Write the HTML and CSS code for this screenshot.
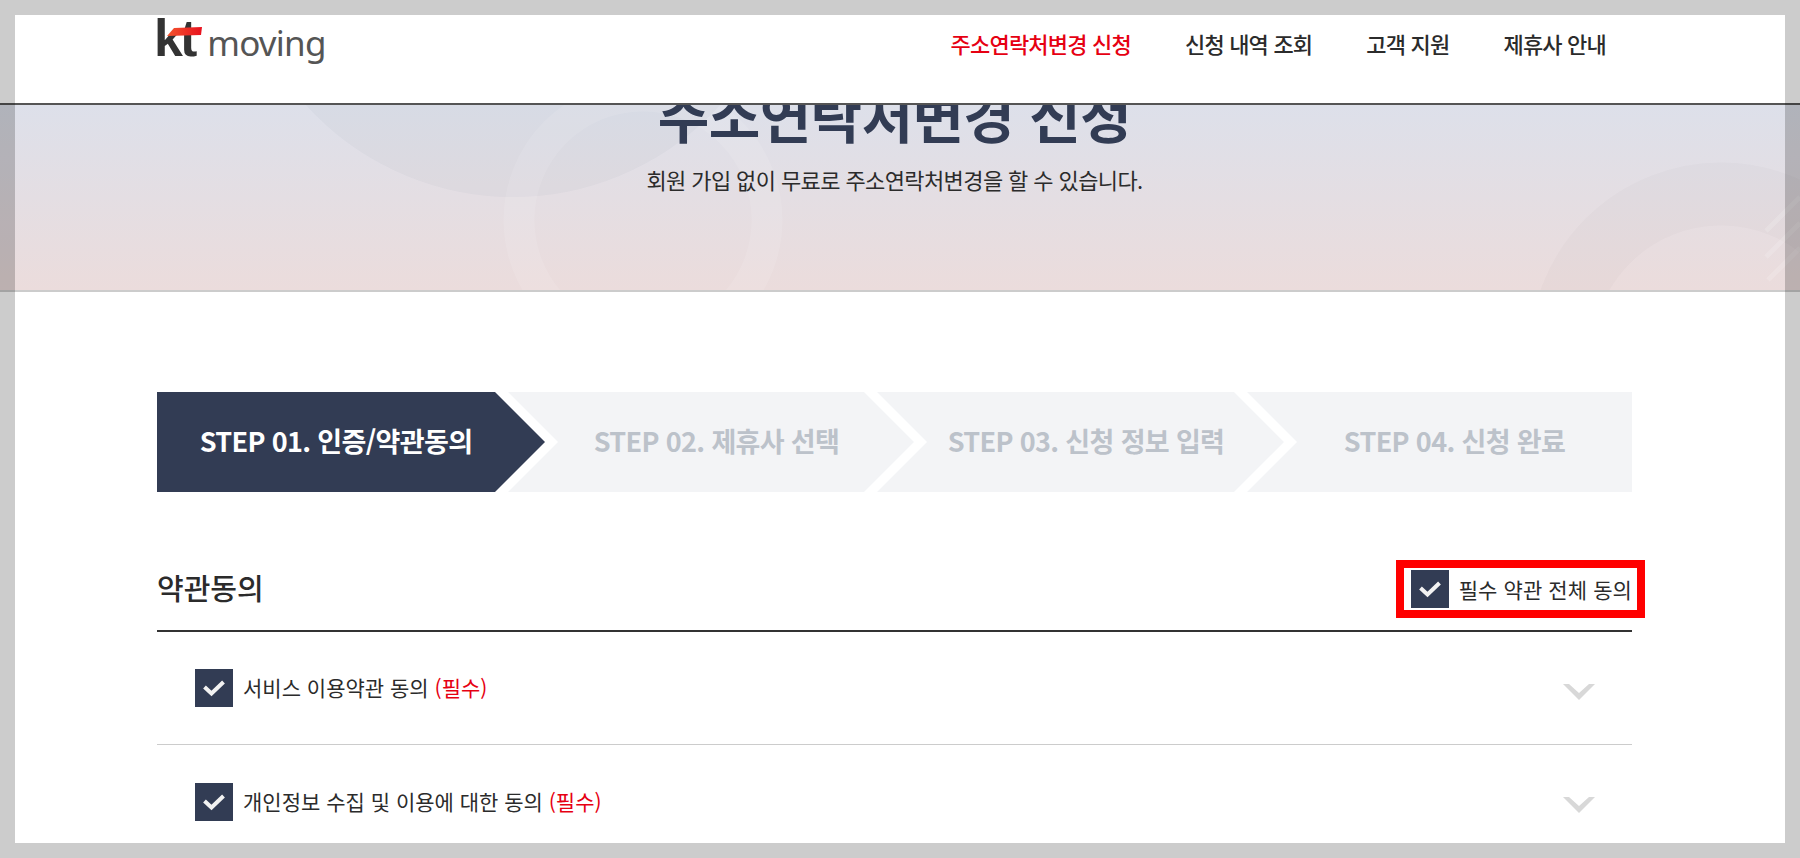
FILE: index.html
```html
<!DOCTYPE html>
<html lang="ko">
<head>
    <meta charset="UTF-8">
    <meta name="viewport" content="width=device-width, initial-scale=1.0">
    <title>kt moving - 주소연락처변경 신청</title>
    <link rel="stylesheet" href="styles.css">
</head>
<body>
    <!-- Header -->
    <header class="site-header">
        <div class="wrap header-inner">
            <a class="logo" href="#">
                <span class="logo-kt">kt</span>
                <svg class="logo-swoosh" viewBox="0 0 35 9" aria-hidden="true">
                    <defs>
                        <linearGradient id="swoosh" x1="0" x2="1" y1="0" y2="0">
                            <stop offset="0" stop-color="#f4562f"/>
                            <stop offset="1" stop-color="#e8111e"/>
                        </linearGradient>
                    </defs>
                    <polygon points="7,1 35,0 34,8 0,9" fill="url(#swoosh)"/>
                </svg>
                <span class="logo-moving">moving</span>
            </a>
            <nav class="main-nav">
                <a class="active" href="#">주소연락처변경 신청</a>
                <a href="#">신청 내역 조회</a>
                <a href="#">고객 지원</a>
                <a href="#">제휴사 안내</a>
            </nav>
        </div>
    </header>

    <!-- Hero band -->
    <section class="hero">
        <svg class="hero-deco" aria-hidden="true">
            <circle cx="513" cy="-187" r="279" fill="#3a4a70" fill-opacity="0.035"/>
            <circle cx="643" cy="115" r="124" fill="none" stroke="#fff" stroke-opacity="0.1" stroke-width="31"/>
            <circle cx="1721" cy="249" r="160" fill="none" stroke="#5a5040" stroke-opacity="0.025" stroke-width="63"/>
            <g stroke="#fff" stroke-opacity="0.16" stroke-width="5">
                <line x1="1766" y1="126" x2="1800" y2="92"/>
                <line x1="1766" y1="152" x2="1800" y2="118"/>
                <line x1="1768" y1="175" x2="1800" y2="143"/>
            </g>
        </svg>
        <div class="wrap hero-text">
            <h1>주소연락처변경 신청</h1>
            <p>회원 가입 없이 무료로 주소연락처변경을 할 수 있습니다.</p>
        </div>
    </section>

    <main class="wrap">
        <!-- Steps -->
        <ol class="steps">
            <li class="step step-first active">STEP 01. 인증/약관동의</li>
            <li class="step step-second">STEP 02. 제휴사 선택</li>
            <li class="step step-third">STEP 03. 신청 정보 입력</li>
            <li class="step step-last">STEP 04. 신청 완료</li>
        </ol>

        <!-- Terms -->
        <div class="terms-head">
            <h2>약관동의</h2>
            <label class="check-all">
                <span class="check-box"><svg viewBox="0 0 38 38" aria-hidden="true"><polyline points="9.5,18 16.5,24.5 28.5,13"/></svg></span>
                필수 약관 전체 동의
            </label>
        </div>
        <ul class="terms-list">
            <li class="terms-row">
                <span class="check-box"><svg viewBox="0 0 38 38" aria-hidden="true"><polyline points="9.5,18 16.5,24.5 28.5,13"/></svg></span>
                <span class="terms-label">서비스 이용약관 동의 <em>(필수)</em></span>
                <svg class="chevron" viewBox="0 0 32 16" aria-hidden="true"><polygon points="0,0 6,0 16,9 26,0 32,0 16,16"/></svg>
            </li>
            <li class="terms-row">
                <span class="check-box"><svg viewBox="0 0 38 38" aria-hidden="true"><polyline points="9.5,18 16.5,24.5 28.5,13"/></svg></span>
                <span class="terms-label">개인정보 수집 및 이용에 대한 동의 <em>(필수)</em></span>
                <svg class="chevron" viewBox="0 0 32 16" aria-hidden="true"><polygon points="0,0 6,0 16,9 26,0 32,0 16,16"/></svg>
            </li>
        </ul>
    </main>

    <!-- Grey frame laid over the whole page -->
    <div class="page-frame" aria-hidden="true"></div>
</body>
</html>
```

FILE: styles.css
```css
:root {
    --navy: #323c54;
    --text-color: #2b2b2b;
    --red: #e60012;
}

* {
    margin: 0;
    padding: 0;
    box-sizing: border-box;
}

html, body {
    height: 858px;
    overflow: hidden;
}

body {
    font-family: "Noto Sans CJK KR", "Noto Sans", sans-serif;
    color: var(--text-color);
    background-color: #fff;
}

a {
    color: inherit;
    text-decoration: none;
}

ol, ul {
    list-style: none;
}

.wrap {
    width: 1475px;
    margin-left: 157px;
}

.page-frame {
    position: fixed;
    inset: 0;
    border: 15px solid rgba(0, 0, 0, 0.2);
    pointer-events: none;
}

/* Header */
.site-header {
    height: 105px;
    border-bottom: 2px solid #555;
}

.header-inner {
    display: flex;
    justify-content: space-between;
    padding-right: 26px;
}

.logo {
    position: relative;
    display: flex;
    align-items: baseline;
    height: 88px;
    line-height: 76px;
}

.logo-kt {
    margin-left: -3px;
    margin-right: 13px;
    font-family: "Liberation Sans", sans-serif;
    font-weight: 700;
    font-size: 52px;
    letter-spacing: -3px;
    color: #333;
}

.logo-swoosh {
    position: absolute;
    left: 10px;
    top: 27px;
    width: 35px;
    height: 9px;
}

.logo-moving {
    font-family: "Noto Sans", sans-serif;
    font-size: 35px;
    color: #555;
    letter-spacing: -0.8px;
}

.main-nav {
    display: flex;
    gap: 54px;
    padding-top: 26px;
    font-size: 22px;
    line-height: 34px;
    font-weight: 500;
    letter-spacing: -0.8px;
}

.main-nav .active {
    color: var(--red);
}

/* Hero */
.hero {
    position: relative;
    height: 187px;
    overflow: hidden;
    border-bottom: 2px solid #ccc;
    background: linear-gradient(#dde0ea, #ebdcdc);
}

.hero-deco {
    position: absolute;
    top: 0;
    left: 0;
    width: 100%;
    height: 100%;
}

.hero-text {
    position: relative;
    text-align: center;
}

.hero-text h1 {
    margin-top: -31px;
    font-size: 56px;
    line-height: 80px;
    font-weight: 700;
    letter-spacing: -0.6px;
    color: var(--navy);
}

.hero-text p {
    margin-top: 10px;
    font-size: 22px;
    line-height: 30px;
    letter-spacing: -0.6px;
}

/* Steps */
.steps {
    display: flex;
    height: 100px;
    margin-top: 100px;
}

.step {
    display: flex;
    align-items: center;
    justify-content: center;
    margin-left: -37px;
    padding: 0 50px 3px 61px;
    font-size: 27px;
    font-weight: 700;
    letter-spacing: -0.65px;
    color: #bcc2ca;
    background-color: #f3f4f6;
    clip-path: polygon(0 0, calc(100% - 50px) 0, 100% 50%, calc(100% - 50px) 100%, 0 100%, 50px 50%);
}

.step-first {
    width: 388px;
    margin-left: 0;
    padding-left: 20px;
    clip-path: polygon(0 0, calc(100% - 50px) 0, 100% 50%, calc(100% - 50px) 100%, 0 100%);
}

.step-second {
    width: 406px;
}

.step-third {
    width: 407px;
}

.step-last {
    width: 385px;
    padding-left: 50px;
    padding-right: 20px;
    clip-path: polygon(0 0, 100% 0, 100% 100%, 0 100%, 50px 50%);
}

.step.active {
    color: #fff;
    background-color: var(--navy);
}

/* Terms */
.terms-head {
    display: flex;
    align-items: center;
    justify-content: space-between;
    margin-top: 68px;
    margin-bottom: 12px;
}

.terms-head h2 {
    padding-bottom: 4px;
    font-size: 29px;
    font-weight: 500;
}

.check-all {
    display: flex;
    align-items: center;
    gap: 10px;
    height: 58px;
    margin-right: -13px;
    padding: 0 5px 0 7px;
    border: 8px solid #f00;
    font-size: 21px;
    letter-spacing: 0.1px;
}

.check-box {
    display: block;
    flex: none;
    width: 38px;
    height: 38px;
    background-color: var(--navy);
}

.check-box svg {
    display: block;
    width: 38px;
    height: 38px;
    fill: none;
    stroke: #f2f2f2;
    stroke-width: 4;
}

.terms-list {
    border-top: 2px solid #333;
}

.terms-row {
    display: flex;
    align-items: center;
    gap: 10px;
    height: 113px;
    padding: 0 37px 0 38px;
    border-bottom: 1px solid #ccc;
    font-size: 21px;
}

.terms-row:last-child {
    border-bottom: 0;
}

.terms-label {
    padding-bottom: 2px;
}

.terms-label em {
    font-style: normal;
    color: var(--red);
}

.chevron {
    width: 32px;
    height: 16px;
    margin-left: auto;
    margin-top: 7px;
    fill: #d8d8d8;
}
```
